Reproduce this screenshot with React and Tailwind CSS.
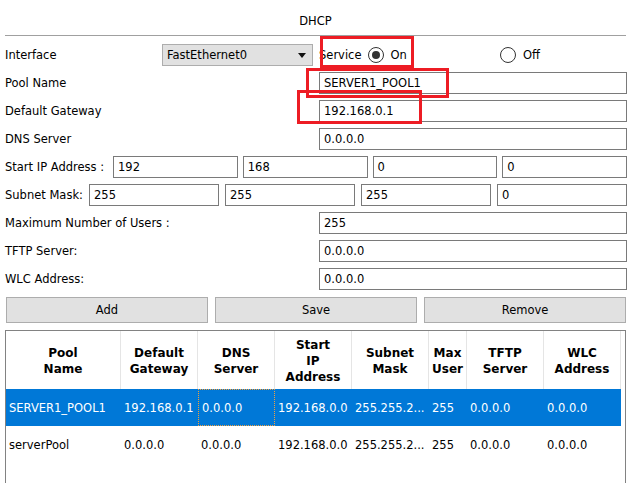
import { useState } from "react";

const font = "font-['DejaVu_Sans',sans-serif]";

const rows = [
  ["SERVER1_POOL1", "192.168.0.1", "0.0.0.0", "192.168.0.0", "255.255.2...", "255", "0.0.0.0", "0.0.0.0"],
  ["serverPool", "0.0.0.0", "0.0.0.0", "192.168.0.0", "255.255.2...", "255", "0.0.0.0", "0.0.0.0"],
];

const headers = [
  ["Pool", "Name"],
  ["Default", "Gateway"],
  ["DNS", "Server"],
  ["Start", "IP", "Address"],
  ["Subnet", "Mask"],
  ["Max", "User"],
  ["TFTP", "Server"],
  ["WLC", "Address"],
];

const cols = "grid grid-cols-[115px_77px_77px_77px_77px_38px_77px_77px]";

function Field({ value, className = "" }) {
  return (
    <div
      className={`h-[22px] border border-[#7a7a7a] bg-white pl-[4px] pt-[2px] flex items-center text-[11.5px] text-black ${className}`}
    >
      {value}
    </div>
  );
}

function Row({ label, children }) {
  return (
    <div className="h-[28px] flex items-center">
      <div className="w-[319px] pl-[5px] pt-[2px] text-[11.5px] text-black">{label}</div>
      {children}
    </div>
  );
}

function Radio({ checked }) {
  return (
    <span className="w-[16px] h-[16px] rounded-full border border-[#333] bg-white flex items-center justify-center">
      {checked && <span className="w-[8px] h-[8px] rounded-full bg-[#333]" />}
    </span>
  );
}

export default function App() {
  const [selected] = useState(0);

  return (
    <div className={`relative w-[631px] h-[483px] overflow-hidden bg-white ${font}`}>
      {/* TITLE */}
      <div className="h-[35px] pt-[8px] flex items-center justify-center text-[11.5px] text-black">
        DHCP
      </div>
      <div className="mx-[5px] h-px bg-[#a0a0a0]" />

      {/* FORM */}
      <div className="pt-[5px]">
        <div className="h-[28px] flex items-center">
          <div className="w-[162px] pl-[5px] pt-[2px] text-[11.5px] text-black">Interface</div>
          <div className="w-[151px] h-[22px] border border-[#adadad] bg-[#e1e1e1] flex items-center justify-between pl-[4px] pr-[6px] text-[11.5px] text-black">
            <span className="pt-[2px]">FastEthernet0</span>
            <svg width="8" height="5" viewBox="0 0 8 5">
              <path d="M0 0h8L4 5z" fill="#111" />
            </svg>
          </div>
          <div className="ml-[6px] w-[181px] flex items-center text-[11.5px] text-black">
            <span className="pt-[2px]">Service</span>
            <span className="ml-[6px]"><Radio checked /></span>
            <span className="ml-[7px] pt-[2px]">On</span>
          </div>
          <div className="flex items-center text-[11.5px] text-black">
            <Radio />
            <span className="ml-[7px] pt-[2px]">Off</span>
          </div>
        </div>

        <Row label="Pool Name"><Field value="SERVER1_POOL1" className="w-[308px]" /></Row>
        <Row label="Default Gateway"><Field value="192.168.0.1" className="w-[308px]" /></Row>
        <Row label="DNS Server"><Field value="0.0.0.0" className="w-[308px]" /></Row>

        <div className="h-[28px] flex items-center">
          <div className="w-[113px] pl-[5px] pt-[2px] text-[11.5px] text-black whitespace-nowrap">Start IP Address :</div>
          <div className="w-[514px] grid grid-cols-4 gap-[5px]">
            {["192", "168", "0", "0"].map((v, i) => <Field key={i} value={v} />)}
          </div>
        </div>

        <div className="h-[28px] flex items-center">
          <div className="w-[89px] pl-[5px] pt-[2px] text-[11.5px] text-black whitespace-nowrap">Subnet Mask:</div>
          <div className="w-[538px] grid grid-cols-4 gap-[6px]">
            {["255", "255", "255", "0"].map((v, i) => <Field key={i} value={v} />)}
          </div>
        </div>

        <Row label="Maximum Number of Users :"><Field value="255" className="w-[308px]" /></Row>
        <Row label="TFTP Server:"><Field value="0.0.0.0" className="w-[308px]" /></Row>
        <Row label="WLC Address:"><Field value="0.0.0.0" className="w-[308px]" /></Row>
      </div>

      {/* ACTIONS */}
      <div className="mt-[4px] ml-[6px] flex gap-[7px]">
        {["Add", "Save", "Remove"].map((b) => (
          <button
            key={b}
            className="w-[202px] h-[26px] pt-[2px] border border-[#adadad] bg-[#e1e1e1] text-[11.5px] text-black"
          >
            {b}
          </button>
        ))}
      </div>

      {/* TABLE */}
      <div className="mt-[7px] ml-[5px] w-[621px] h-[200px] border border-[#828282] bg-white">
        <div className={cols}>
          {headers.map((h, i) => (
            <div
              key={i}
              className="h-[58px] pt-[2px] border-r border-[#e5e5e5] flex flex-col items-center justify-center text-[12px] font-bold leading-[16px] text-black text-center"
            >
              {h.map((l) => <span key={l}>{l}</span>)}
            </div>
          ))}
        </div>
        {rows.map((r, ri) => (
          <div
            key={ri}
            className={`${cols} h-[37px] w-[615px] ${ri === selected ? "bg-[#0078d7] text-white" : "text-black"}`}
          >
            {r.map((c, ci) => (
              <div
                key={ci}
                className={`flex items-center pl-[3px] pt-[2px] text-[11.5px] whitespace-nowrap overflow-hidden ${
                  ri === selected && ci === 2 ? "border border-dotted border-[#f0a040] pl-[2px]" : ""
                }`}
              >
                {c}
              </div>
            ))}
          </div>
        ))}
      </div>

      {/* ANNOTATIONS */}
      <div className="absolute left-[320px] top-[36px] w-[94px] h-[32px] border-[3px] border-[#ed1c24]" />
      <div className="absolute left-[306px] top-[68px] w-[143px] h-[30px] border-[3px] border-[#ed1c24]" />
      <div className="absolute left-[297px] top-[90px] w-[125px] h-[34px] border-[3px] border-[#ed1c24]" />
    </div>
  );
}
